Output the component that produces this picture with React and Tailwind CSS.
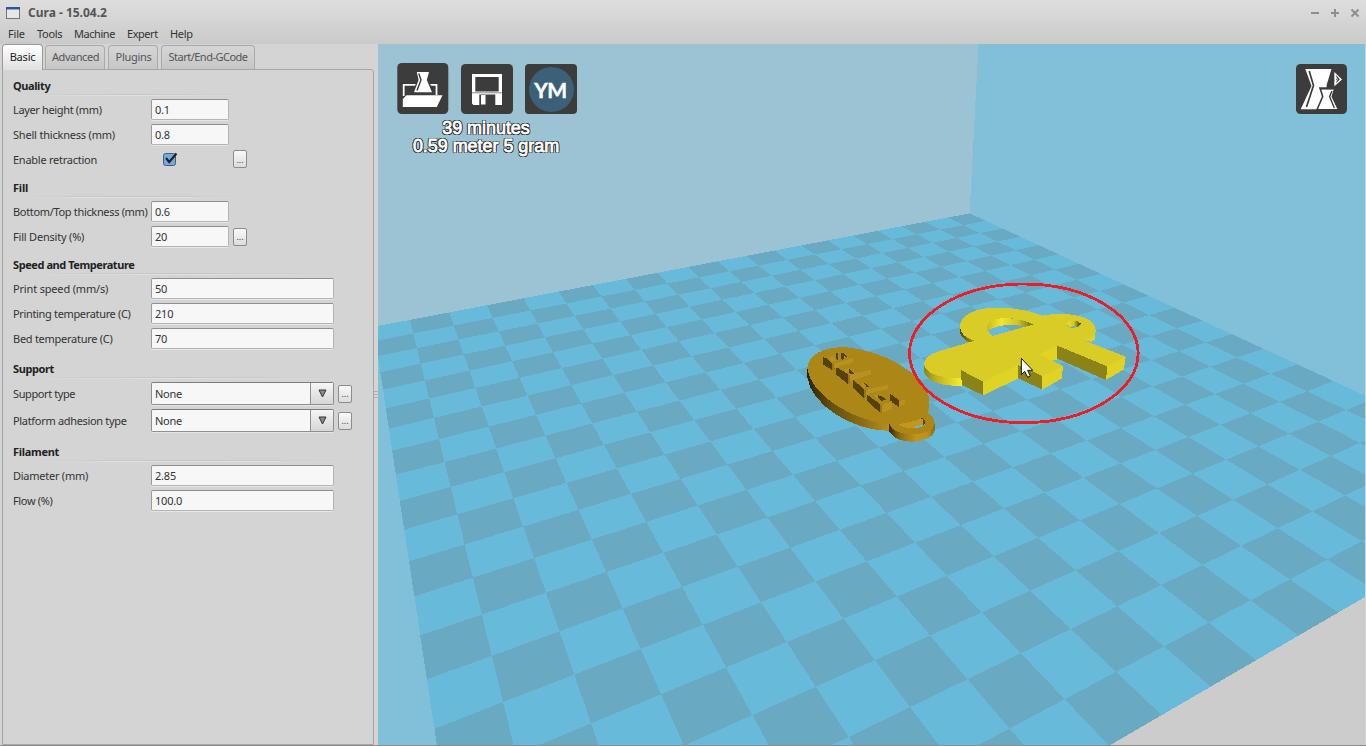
import React from "react";

const LIMIT = 19.9;

// Perspective projection of a build-plate coordinate into viewport pixels.
function project(u, v) {
  const w = 1 - 0.01384 * u - 0.0237 * v;
  const x = 969.7 + (-21.71 * u + 15.63 * v) / w;
  const y = 213 + (4.13 * u + 7.2 * v) / w;
  return `${(x - 378).toFixed(1)},${(y - 43.6).toFixed(1)}`;
}

function quad(u0, v0, u1, v1) {
  return [project(u0, v0), project(u1, v0), project(u1, v1), project(u0, v1)].join(" ");
}

const darkTiles = [];
for (let u = 0; u < 20; u++) {
  for (let v = 0; v < 20; v++) {
    if ((u + v) % 2 === 0) {
      darkTiles.push(quad(u, v, Math.min(u + 1, LIMIT), Math.min(v + 1, LIMIT)));
    }
  }
}

function Tag() {
  const dark = "#55410c";
  const lite = "#b99120";
  return (
    <g>
      <path fill="url(#tagSide)" d="M52 290V322C62 400 180 482 300 483L355 478C395 465 414 445 417 420V385Z" />
      <path fill="url(#ringSide)" d="M298 462V487C312 507 340 515 367 515C405 514 434 498 434 482V460Z" />
      <path fill="#ad8618" d="M52 292C56 250 110 229 170 232C270 240 400 306 417 382V402L414 430C426 436 434 448 434 462C432 480 404 493 367 493C334 493 306 484 298 462C190 455 56 370 52 292Z" />
      <path fill="#c3971d" d="M327 464C340 456 372 458 392 445L406 447L406 462L370 474C352 476 334 470 327 464Z" />
      <path fill="#68b9d9" d="M370 474C380 466 396 467 406 462C405 469 390 474 370 474Z" />
      <path fill={dark} d="M392 444C402 444 407 450 406 460L400 464V450Z" />
      <path fill={dark} d="M99 262L111 266L126 281L126 300L99 283ZM138 290L174 313V342L138 313ZM190 330L222 357V385L190 353ZM232 374L271 403V429L232 393ZM137 249L145 247V273L138 266ZM152 250L160 250L172 260L163 263L158 269L152 265ZM176 293L192 311L180 313L176 304ZM222 338L239 349L228 352ZM264 375L284 383L288 389L274 393L264 384ZM300 371L327 390V412L300 392Z" />
      <path fill={lite} d="M126 283L189 264V277L145 290L126 300ZM174 314L243 300V313L187 331L174 342ZM222 361L293 345V357L236 371L222 385ZM271 408L305 394V418L271 430ZM327 392L344 391V402L327 412ZM118 264L131 256L137 272L126 275ZM165 297L176 295V307L165 308ZM214 341L222 339L229 350L218 350ZM250 374L264 374V387ZM158 260L166 259V266Z" />
      <path fill="#9a7613" d="M126 283L130 280L134 297L126 301ZM174 314L179 314V338L174 342ZM222 361L228 361V382L222 385ZM271 406L275 405V428L271 430Z" />
    </g>
  );
}

function Figure() {
  const lit = "#e0d325";
  const shade = "#8b8317";
  return (
    <g>
      <path fill="url(#loopSide)" d="M510 168V190C515 204 530 214 542 218L590 210V168Z" />
      <path fill="#e0d027" d="M860 180H917L915 208L904 216L876 208Z" />
      <path fill="url(#lobeSide)" d="M402 278V305C405 328 450 347 490 347H516V300Z" />
      <path fill={lit} d="M745 254L802 225V268L786 272Z" />
      <path fill="#d9cc26" fillRule="evenodd" d="M402 281C403 258 435 245 470 237L553 212C525 203 510 190 510 168C510 137 555 115 610 113C670 112 720 121 757 137C800 128 850 131 884 143C912 155 917 168 917 180C916 196 904 204 880 210L1007 260L952 289L802 227L748 253L819 288L757 320L685 285L580 335L512 300L516 323C450 327 405 310 402 281ZM592 180L607 198L730 163C695 146 650 140 618 148C596 155 588 168 592 180ZM830 162C830 173 845 174 853 173C868 172 874 166 872 160C865 149 832 150 830 162Z" />
      <path fill={shade} d="M512 300L580 335V376L516 345ZM685 285L757 318V359L685 325ZM802 227L952 289L948 330L802 266Z" />
      <path fill={lit} d="M580 335L685 285V325L580 376ZM757 319L819 288L815 326L757 359ZM952 289L1007 260L1002 298L948 330Z" />
      <path fill="url(#holeSide)" d="M592 183V166C598 148 625 143 660 145C690 148 715 155 731 163L707 170C670 162 630 161 592 183Z" />
      <path fill="url(#eyeSide)" d="M830 163C831 149 865 149 872 160C870 165 867 169 862 171L853 168L840 171Z" />
      <path fill="#68b9d9" d="M840 171L853 167L862 171Q851 174 840 171Z" />
    </g>
  );
}

function Scene() {
  return (
    <svg width="987" height="701" viewBox="0 0 987 701" className="block" shapeRendering="crispEdges">
      <defs>
        <linearGradient id="tagSide" gradientUnits="userSpaceOnUse" x1="52" y1="0" x2="300" y2="0">
          <stop offset="0" stopColor="#2c2105" />
          <stop offset=".3" stopColor="#65500e" />
          <stop offset=".65" stopColor="#8b6b13" />
          <stop offset="1" stopColor="#b98e1a" />
        </linearGradient>
        <linearGradient id="ringSide" gradientUnits="userSpaceOnUse" x1="298" y1="0" x2="434" y2="0">
          <stop offset="0" stopColor="#3d2e07" />
          <stop offset=".25" stopColor="#8f6f14" />
          <stop offset=".6" stopColor="#c0951d" />
          <stop offset=".85" stopColor="#ba901c" />
          <stop offset="1" stopColor="#8c6b12" />
        </linearGradient>
        <linearGradient id="loopSide" gradientUnits="userSpaceOnUse" x1="510" y1="0" x2="555" y2="0">
          <stop offset="0" stopColor="#4f4a0c" />
          <stop offset="1" stopColor="#a89d1b" />
        </linearGradient>
        <linearGradient id="lobeSide" gradientUnits="userSpaceOnUse" x1="402" y1="0" x2="516" y2="0">
          <stop offset="0" stopColor="#8d8316" />
          <stop offset=".3" stopColor="#bbae1f" />
          <stop offset="1" stopColor="#fbed2d" />
        </linearGradient>
        <linearGradient id="holeSide" gradientUnits="userSpaceOnUse" x1="592" y1="0" x2="731" y2="0">
          <stop offset="0" stopColor="#c9bc22" />
          <stop offset=".3" stopColor="#f4e62b" />
          <stop offset=".65" stopColor="#d2c423" />
          <stop offset="1" stopColor="#6e6711" />
        </linearGradient>
        <linearGradient id="eyeSide" gradientUnits="userSpaceOnUse" x1="830" y1="0" x2="872" y2="0">
          <stop offset="0" stopColor="#efe12a" />
          <stop offset=".5" stopColor="#d6c924" />
          <stop offset="1" stopColor="#3f3a09" />
        </linearGradient>
      </defs>
      <rect width="987" height="701" fill="#cccccc" />
      <path fill="#82bfd8" d="M0 290V701H90L10 290Z" />
      <path fill="#9bc3d3" d="M0 0H600.5L591.5 172L0 290Z" />
      <path fill="#82bfd8" d="M600.5 0H987V353.5L591.5 171Z" />
      <polygon fill="#68bada" points={quad(0, 0, LIMIT, LIMIT)} />
      {darkTiles.map((points) => (
        <polygon key={points} fill="#69a9c2" points={points} />
      ))}
      <g transform="translate(412 226) scale(.33333)">
        <Tag />
        <Figure />
        <ellipse cx="701.5" cy="250" rx="343" ry="208" fill="none" stroke="#ee1c24" strokeWidth="8.5" />
        <path d="M694 265V314L704 304L713 322L721 318L713 301H728Z" fill="#fff" stroke="#111" strokeWidth="3" shapeRendering="auto" />
      </g>
    </svg>
  );
}

function LoadIcon() {
  return (
    <svg width="52" height="52" viewBox="0 0 52 52">
      <rect x=".3" y="0" width="51" height="51" rx="4.5" fill="#3c3c3c" />
      <path d="M6.7 33V21.8H39.5V32" fill="none" stroke="#fff" strokeWidth="1.8" />
      <path d="M18.5 20H20L16 30H36L32 20H33Z" fill="#3c3c3c" stroke="#3c3c3c" strokeWidth="1.5" />
      <path d="M9.5 32.3H45.5L39.8 44H5.8V36Z" fill="#fff" />
      <path d="M19.8 9H32L29.8 17L35 29.3H17L21.6 17Z" fill="#fff" />
      <path d="M21.8 10.5L24 17L20 27.5" fill="none" stroke="#3c3c3c" strokeWidth="1.4" />
    </svg>
  );
}

function SaveIcon() {
  return (
    <svg width="52" height="52" viewBox="0 0 52 52">
      <rect x="0" y="1" width="52" height="50" rx="4.5" fill="#3c3c3c" />
      <path fill="#fff" fillRule="evenodd" d="M11 11H41V42H12.5L11 40.5ZM14.3 14V28.5H37.7V14ZM18.3 31.5V42H34.3V31.5Z" />
      <path fill="#fff" d="M20 32H24.5V41.5H20Z" />
      <path d="M11 29.8H41" stroke="#888" strokeWidth="1" />
    </svg>
  );
}

function ViewModeIcon() {
  return (
    <svg width="52" height="52" viewBox="0 0 52 52">
      <rect x="0" y="1" width="51" height="50" rx="4.5" fill="#3c3c3c" />
      <path d="M9.3 6H35.5L30.6 22V27L27 46.3H4.7L15.5 23Z" fill="#fff" />
      <path d="M13.2 8L17.5 22.5L10.5 44" fill="none" stroke="#3c3c3c" strokeWidth="1.7" />
      <path d="M24 25H39L36.3 33.5L42.5 46.7H21L26.7 33.5Z" fill="#fff" stroke="#3c3c3c" strokeWidth="1.6" />
      <path d="M24 25.8H39" stroke="#3c3c3c" strokeWidth="1.6" />
      <path d="M36 28L33.6 33.5L38.3 45" fill="none" stroke="#3c3c3c" strokeWidth="1.4" />
      <path d="M38.4 9V23.2L46 16.5Z" fill="#fff" />
      <path d="M40.2 12V20L43.8 16.5Z" fill="#3c3c3c" />
      <path d="M38.6 11.5L41.3 16.5L38.6 20.5" fill="none" stroke="#fff" strokeWidth="1" />
    </svg>
  );
}

function YouMagineIcon() {
  return (
    <div className="mt-px flex h-[50px] w-[52px] items-center justify-center rounded-[4px] bg-[#3c3c3c]">
      <div className="flex size-[45px] items-center justify-center rounded-full bg-[#3d6079] pt-px font-['Lato'] text-[21px] leading-none font-bold text-white">
        <span className="-ml-px tracking-[-0.5px] [-webkit-text-stroke:0.4px_#fff]">YM</span>
      </div>
    </div>
  );
}

function Row({ label, size = "h-[25px]", track = "tracking-[-0.25px]", children }) {
  return (
    <div className={`flex items-center ${size}`}>
      <div className={`w-[138px] shrink-0 whitespace-nowrap ${track}`}>{label}</div>
      {children}
    </div>
  );
}

function Field({ value, wide }) {
  return (
    <div
      className={`flex h-[21px] shrink-0 items-center rounded-[2px] border border-[#b4b4b4] border-t-[#8f8f8f] border-l-[#9c9c9c] bg-[#f7f7f7] pl-[3px] tracking-[-0.2px] shadow-[0_1px_0_#e6e6e6] ${wide ? "w-[183px]" : "w-[78px]"}`}
    >
      {value}
    </div>
  );
}

function More() {
  return (
    <div className="ml-[4px] flex h-[18px] w-[14px] shrink-0 items-center justify-center rounded-[2px] border border-[#8c8c8c] bg-linear-to-b from-[#fafafa] to-[#dcdcdc] text-[9px] leading-none text-[#444]">
      <span>...</span>
    </div>
  );
}

function Combo({ value }) {
  return (
    <div className="flex h-[23px] w-[183px] shrink-0 rounded-[2px] border border-[#8f8f8f] border-t-[#7c7c7c] bg-[#f7f7f7] shadow-[0_1px_0_#e6e6e6]">
      <div className="flex flex-1 items-center pl-[3px] tracking-[-0.25px]">{value}</div>
      <div className="flex w-[23px] items-center justify-center border-l border-[#8f8f8f] bg-linear-to-b from-[#f6f6f6] to-[#d6d6d6]">
        <svg width="9" height="9" viewBox="0 0 9 9">
          <path d="M1 1H8L4.5 8Z" fill="#8a8a8a" stroke="#333" strokeWidth="1" />
        </svg>
      </div>
    </div>
  );
}

function Section({ title, wide, track = "tracking-normal", className, children }) {
  return (
    <section className={className}>
      <h2 className={`flex h-[19px] items-center pt-px font-bold text-[#222] ${track}`}>{title}</h2>
      <div className={`h-px bg-linear-to-r from-transparent via-[#c4c4c4] to-transparent ${wide ? "w-[345px]" : "w-[236px]"}`} />
      <div className={`mb-px h-px bg-linear-to-r from-transparent via-[#e2e2e2] to-transparent ${wide ? "w-[345px]" : "w-[236px]"}`} />
      {children}
    </section>
  );
}

function Checkbox() {
  return (
    <svg width="16" height="16" viewBox="0 0 16 16" className="ml-[11px] mr-[51px] shrink-0">
      <rect x="1.5" y="2.5" width="12" height="12" rx="2" fill="#78a9da" stroke="#3f5f85" />
      <path d="M4 7L7.2 11L14.5 2.5" fill="none" stroke="#222" strokeWidth="2.1" />
    </svg>
  );
}

function Tab({ children, width }) {
  return (
    <div className={`mt-px flex h-[24px] items-center justify-center rounded-t-[4px] border border-b-0 border-[#aaa] bg-linear-to-b from-[#d6d6d6] to-[#c6c6c6] pb-[2px] text-[#555] ${width}`}>
      {children}
    </div>
  );
}

export default function App() {
  return (
    <div className="flex h-[746px] w-[1366px] flex-col overflow-hidden bg-[#d4d4d4] font-['Noto_Sans','Open_Sans',sans-serif] text-[11px] leading-[15px] text-[#333]">
      <header className="h-[44px] bg-linear-to-b from-[#dedede] to-[#cacaca]">
        <div className="flex h-[25px] items-center">
          <svg width="14" height="12" viewBox="0 0 14 12" className="ml-[6px]">
            <rect x=".5" y=".5" width="13" height="11" fill="#e6e8e2" stroke="#777" />
            <path d="M0 0H14V2.5H0Z" fill="#2a5596" />
            <path d="M1 2.5H13" stroke="#88a9d8" />
          </svg>
          <div className="ml-[8px] flex-1 text-[12px] font-bold text-[#555]">Cura - 15.04.2</div>
          <svg width="56" height="12" viewBox="0 0 56 12" fill="none" stroke="#8e8e8e" strokeWidth="2">
            <path d="M1 6H9M21 6H29M25 2V10" />
            <path d="M41.5 2.5L48.5 9.5M48.5 2.5L41.5 9.5" />
          </svg>
        </div>
        <nav className="flex h-[17px] items-center pl-[8px] tracking-[-0.3px] whitespace-nowrap">
          <span className="w-[29px] tracking-[-0.2px]">File</span>
          <span className="w-[37px]">Tools</span>
          <span className="w-[53px] tracking-[-0.45px]">Machine</span>
          <span className="w-[43px] tracking-[-0.45px]">Expert</span>
          <span>Help</span>
        </nav>
      </header>
      <main className="flex h-[701px]">
        <aside className="flex w-[378px] shrink-0">
          <div className="flex w-[374px] flex-col pl-[2px]">
            <div className="flex h-[25px] whitespace-nowrap">
              <div className="relative flex h-[26px] w-[41px] items-center justify-center rounded-t-[4px] border border-b-0 border-[#999] bg-linear-to-b from-white to-[#e0e0e0] pb-[3px] tracking-[-0.2px] text-[#222]">
                Basic
              </div>
              <div className="flex gap-[3px] pl-[2px]">
                <Tab width="w-[60px] pl-px tracking-[-0.45px]">Advanced</Tab>
                <Tab width="w-[50px] pl-px tracking-[-0.3px]">Plugins</Tab>
                <Tab width="w-[94px] tracking-[-0.5px]">Start/End-GCode</Tab>
              </div>
            </div>
            <div className="flex-1 rounded-tr-[3px] border border-[#a6a6a6] bg-[#d4d4d4] pt-[6px] pl-[10px]">
              <Section title="Quality" className="-mt-px" track="tracking-[-0.4px]">
                <Row label="Layer height (mm)" track="tracking-[-0.35px]"><Field value="0.1" /></Row>
                <Row label="Shell thickness (mm)" track="tracking-[-0.2px]"><Field value="0.8" /></Row>
                <Row label="Enable retraction" size="h-[24px]"><Checkbox /><More /></Row>
              </Section>
              <Section title="Fill" className="mt-[6px]" track="tracking-[-0.2px]">
                <Row label="Bottom/Top thickness (mm)" track="tracking-[-0.33px]"><Field value="0.6" /></Row>
                <Row label="Fill Density (%)" track="tracking-[-0.2px]"><Field value="20" /><More /></Row>
              </Section>
              <Section title="Speed and Temperature" wide className="mt-[5px]" track="tracking-[-0.43px]">
                <Row label="Print speed (mm/s)" track="tracking-[-0.17px]"><Field value="50" wide /></Row>
                <Row label="Printing temperature (C)" track="tracking-[-0.34px]"><Field value="210" wide /></Row>
                <Row label="Bed temperature (C)" track="tracking-[-0.27px]"><Field value="70" wide /></Row>
              </Section>
              <Section title="Support" wide className="mt-[7px]" track="tracking-[-0.4px]">
                <Row label="Support type" size="h-[27px]" track="tracking-[-0.4px]"><Combo value="None" /><More /></Row>
                <Row label="Platform adhesion type" size="h-[27px]" track="tracking-[-0.32px]"><Combo value="None" /><More /></Row>
              </Section>
              <Section title="Filament" wide className="mt-[7px]" track="tracking-[-0.3px]">
                <Row label="Diameter (mm)" track="tracking-[-0.25px]"><Field value="2.85" wide /></Row>
                <Row label="Flow (%)" track="tracking-[-0.35px]"><Field value="100.0" wide /></Row>
              </Section>
            </div>
          </div>
          <div className="flex flex-1 flex-col items-center gap-[2px] pt-[347px]">
            <div className="h-px w-[4px] bg-[#b0b0b0]" />
            <div className="h-px w-[4px] bg-[#b0b0b0]" />
            <div className="h-px w-[4px] bg-[#b0b0b0]" />
          </div>
        </aside>
        <section className="relative w-[987px] shrink-0">
          <Scene />
          <div className="absolute top-[19px] left-[19px] flex gap-[12px]">
            <LoadIcon />
            <SaveIcon />
            <YouMagineIcon />
          </div>
          <div className="absolute top-[75px] left-[28px] w-[160px] text-center font-['Liberation_Sans',sans-serif] text-[18px] leading-[18px] tracking-[-0.05px] whitespace-nowrap text-white [-webkit-text-stroke:0.8px_#fff] [text-shadow:1px_0_0_#222,-1px_0_0_#222,0_1px_0_#222,0_-1px_0_#222,1px_1px_0_#222,-1px_1px_0_#222,1px_-1px_0_#222,-1px_-1px_0_#222]">
            <div>39 minutes</div>
            <div>0.59 meter 5 gram</div>
          </div>
          <div className="absolute top-[19px] left-[918px]">
            <ViewModeIcon />
          </div>
        </section>
      </main>
      <div className="h-px bg-[#8c8c8c]" />
    </div>
  );
}
